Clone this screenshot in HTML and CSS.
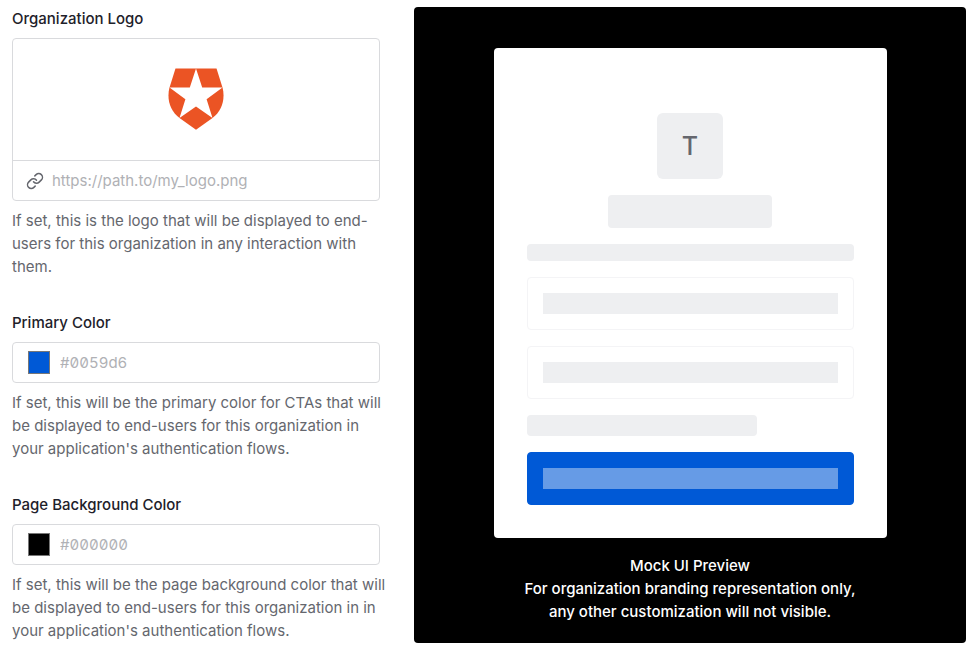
FILE: index.html
```html
<!DOCTYPE html>
<html lang="en">
<head>
<meta charset="utf-8">
<meta name="viewport" content="width=device-width, initial-scale=1">
<title>Organization Branding</title>
<link rel="stylesheet" href="styles.css">
</head>
<body>
<main class="branding">
  <form class="settings">
    <div class="field">
      <label class="field-label" for="logo-url">Organization Logo</label>
      <div class="box">
        <div class="logo-preview">
          <svg class="logo" viewBox="0 0 56 62" aria-hidden="true">
            <path fill="#eb5424" d="M7.500 .5H48.500L54.500 19.500C57.500 31 54 43 44.500 50L28 61.700L11.500 50C2 43-1.500 31 1.500 19.500Z"/>
            <path fill="#fff" d="M28 .6L34.200 19.600H54.500L38.600 31.200L44.500 50L28 38.500L11.500 50L17.400 31.200L1.500 19.600H21.800Z"/>
          </svg>
        </div>
        <div class="input-row url-row">
          <svg class="link-icon" viewBox="0 0 24 24" aria-hidden="true">
            <path d="M10 13a5 5 0 0 0 7.540.540l3-3a5 5 0 0 0-7.070-7.070l-1.720 1.710"/>
            <path d="M14 11a5 5 0 0 0-7.540-.540l-3 3a5 5 0 0 0 7.070 7.070l1.710-1.710"/>
          </svg>
          <input class="text-input" id="logo-url" type="text" placeholder="https://path.to/my_logo.png">
        </div>
      </div>
      <p class="help">If set, this is the logo that will be displayed to end-<br>users for this organization in any interaction with<br>them.</p>
    </div>
    <div class="field">
      <label class="field-label" for="primary-color">Primary Color</label>
      <div class="box input-row">
        <input class="swatch" type="color" value="#0059d6" aria-label="Pick primary color">
        <input class="text-input hex" id="primary-color" type="text" placeholder="#0059d6">
      </div>
      <p class="help">If set, this will be the primary color for CTAs that will<br>be displayed to end-users for this organization in<br>your application's authentication flows.</p>
    </div>
    <div class="field">
      <label class="field-label" for="page-color">Page Background Color</label>
      <div class="box input-row">
        <input class="swatch" type="color" value="#000000" aria-label="Pick page background color">
        <input class="text-input hex" id="page-color" type="text" placeholder="#000000">
      </div>
      <p class="help">If set, this will be the page background color that will<br>be displayed to end-users for this organization in in<br>your application's authentication flows.</p>
    </div>
  </form>
  <section class="preview">
    <div class="card">
      <div class="avatar">T</div>
      <div class="block title"></div>
      <div class="block line"></div>
      <div class="mock-field"><div class="mock-text"></div></div>
      <div class="mock-field"><div class="mock-text"></div></div>
      <div class="block short"></div>
      <div class="mock-field mock-button"><div class="mock-text"></div></div>
    </div>
    <div class="caption">
      <p>Mock UI Preview</p>
      <p>For organization branding representation only, any other customization will not visible.</p>
    </div>
  </section>
</main>
</body>
</html>
```
FILE: styles.css
```css
* {
  box-sizing: border-box;
}

body {
  margin: 0;
  background: #fff;
  color: #1e212a;
  font: 400 15px/23px Inter, sans-serif;
}

p {
  margin: 0;
}

.branding {
  display: grid;
  grid-template-columns: 2fr 3fr;
  gap: 34px;
  align-items: start;
  padding: 7px 9px 9px 12px;
}

.settings {
  display: flex;
  flex-direction: column;
  gap: 33px;
}

.field-label {
  display: block;
  margin-bottom: 8px;
  font-weight: 500;
}

.box {
  border: 1px solid #d9dadd;
  border-radius: 4px;
}

.logo-preview {
  display: flex;
  justify-content: center;
  padding: 29px 0 30px;
}

.logo {
  width: 56px;
  height: 62px;
}

.input-row {
  display: flex;
  align-items: center;
  gap: 10px;
  height: 41px;
  padding: 0 15px;
}

.url-row {
  gap: 8px;
  height: 40px;
  padding: 0 13px;
  border-top: 1px solid #d9dadd;
}

.link-icon {
  width: 18px;
  height: 18px;
  fill: none;
  stroke: #65676e;
  stroke-width: 2;
  stroke-linecap: round;
  stroke-linejoin: round;
}

.text-input {
  flex: 1;
  min-width: 0;
  padding: 0;
  border: 0;
  outline: 0;
  background: none;
  color: #1e212a;
  font: inherit;
}

.text-input::placeholder {
  color: #b0b1b5;
  opacity: 1;
}

.hex {
  font-variant-numeric: slashed-zero tabular-nums;
}

.swatch {
  appearance: none;
  width: 22px;
  height: 23px;
  padding: 0;
  border: 0;
  background: none;
}

.swatch::-webkit-color-swatch-wrapper {
  padding: 0;
}

.swatch::-webkit-color-swatch {
  border: 1px solid #777;
}

.help {
  margin-top: 8px;
  margin-right: -16px;
  color: #65676e;
}

.preview {
  padding: 41px 16px 20px;
  border-radius: 4px;
  background: #000;
}

.card {
  display: flex;
  flex-direction: column;
  gap: 16px;
  max-width: 393px;
  margin: 0 auto;
  padding: 65px 33px 33px;
  border-radius: 4px;
  background: #fff;
}

.avatar {
  display: grid;
  place-items: center;
  align-self: center;
  width: 66px;
  height: 66px;
  border-radius: 6px;
  background: #eeeff1;
  color: #65676e;
  font-size: 25px;
  font-weight: 500;
}

.block {
  border-radius: 4px;
  background: #eeeff1;
}

.title {
  align-self: center;
  width: 50%;
  height: 33px;
}

.line {
  height: 17px;
}

.short {
  width: 230px;
  height: 21px;
}

.mock-field {
  padding: 15px;
  border: 1px solid #f4f4f6;
  border-radius: 4px;
}

.mock-text {
  height: 21px;
  background: #eeeff1;
}

.mock-button {
  border-color: #0059d6;
  background: #0059d6;
}

.mock-button .mock-text {
  background: #669be6;
}

.caption {
  max-width: 340px;
  margin: 16px auto 0;
  color: #fff;
  font-weight: 500;
  text-align: center;
}
```
